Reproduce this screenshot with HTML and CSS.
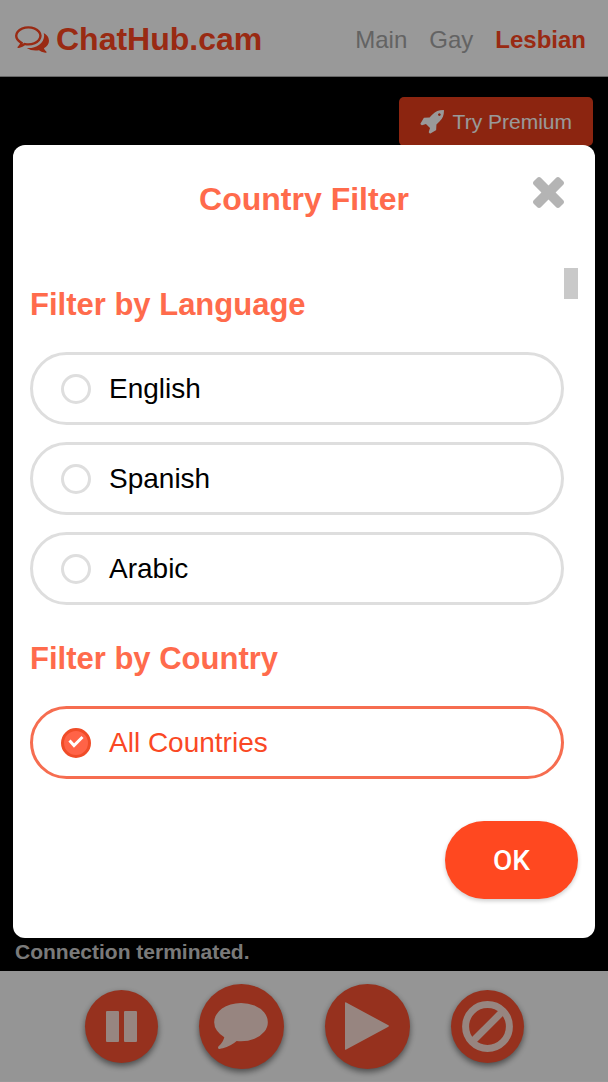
FILE: index.html
```html
<!DOCTYPE html>
<html lang="en">
<head>
<meta charset="utf-8">
<meta name="viewport" content="width=device-width, initial-scale=1">
<title>ChatHub.cam</title>
<link rel="stylesheet" href="styles.css">
</head>
<body>
<div class="page">
  <header class="header">
    <a class="logo" href="#">
      <svg class="logo-icon" viewBox="0 256 1792 1408" aria-hidden="true"><path d="M704 384q-153 0-286 52t-211.5 141-78.5 191q0 82 53 158t149 132l97 56-35 84q34-20 62-39l44-31 53 10q78 14 153 14 153 0 286-52t211.5-141 78.5-191-78.5-191-211.5-141-286-52zm0-128q191 0 353.5 68.5t256.5 186.5 94 257-94 257-256.5 186.5-353.5 68.5q-86 0-176-16-124 88-278 128-36 9-86 16h-3q-11 0-20.5-8t-11.5-21q-1-3-1-6.5t.5-6.5 2-6l2.5-5 3.5-5.5 4-5 4.5-5 4-4.5q5-6 23-25t26-29.5 22.5-29 25-38.5 20.5-44q-124-72-195-177t-71-224q0-139 94-257t256.5-186.5 353.5-68.5zm822 1169q10 24 20.5 44t25 38.5 22.5 29 26 29.5 23 25q1 1 4 4.5t4.5 5 4 5 3.5 5.5l2.5 5 2 6 .5 6.5-1 6.5q-3 14-13 22t-22 7q-50-7-86-16-154-40-278-128-90 16-176 16-271 0-472-132 58 4 88 4 161 0 309-45t264-129q125-92 192-212t67-254q0-77-23-152 129 71 204 178t75 230q0 120-71 224.5t-195 176.5z"/></svg>
      ChatHub.cam
    </a>
    <nav class="nav">
      <a class="nav-link" href="#">Main</a>
      <a class="nav-link" href="#">Gay</a>
      <a class="nav-link nav-link-active" href="#">Lesbian</a>
    </nav>
  </header>

  <main class="stage">
    <button class="premium" type="button">
      <svg class="premium-icon" viewBox="0 128 1664 1664" aria-hidden="true"><path d="M1440 448q0-40-28-68t-68-28-68 28-28 68 28 68 68 28 68-28 28-68zm224-288q0 249-75.5 430.5t-253.5 360.5q-81 80-195 176l-20 379q-2 16-16 26l-384 224q-7 4-16 4-12 0-23-9l-64-64q-13-14-8-32l85-276-281-281-276 85q-3 1-9 1-14 0-23-9l-64-64q-17-19-5-39l224-384q10-14 26-16l379-20q96-114 176-195 188-187 358-258t431-71q14 0 24 9.5t10 22.5z"/></svg>
      Try Premium
    </button>
    <p class="status">Connection terminated.</p>
  </main>

  <footer class="controls">
    <button class="control" type="button" aria-label="Pause">
      <svg class="icon-pause" viewBox="0 0 31 31" aria-hidden="true"><rect width="13" height="31" rx="1"/><rect x="18" width="13" height="31" rx="1"/></svg>
    </button>
    <button class="control control-large" type="button" aria-label="Chat">
      <svg class="icon-comment" viewBox="0 256 1792 1536" aria-hidden="true"><path d="M1792 896q0 174-120 321.5t-326 233-450 85.5q-70 0-145-8-198 175-460 242-49 14-114 22-17 2-30.5-9t-17.5-29v-1q-3-4-.5-12t2-10 4.5-9.5l6-9 7-8.5 8-9q7-8 31-34.5t34.5-38 31-39.5 32.5-51 27-59 26-76q-157-89-247.5-220t-90.5-281q0-130 71-248.5t191-204.5 286-136.5 348-50.5q244 0 450 85.5t326 233 120 321.5z"/></svg>
    </button>
    <button class="control control-large" type="button" aria-label="Next">
      <svg class="icon-play" viewBox="0 0 44 48" aria-hidden="true"><path d="M0 1Q0-.3 1.200.4L43.400 23.300Q44.400 24 43.400 24.700L1.200 47.600Q0 48.300 0 47z"/></svg>
    </button>
    <button class="control" type="button" aria-label="Block">
      <svg class="icon-ban" viewBox="0 0 51 51" aria-hidden="true"><circle cx="25.500" cy="25.500" r="21.900"/><path d="M11 40L40 11"/></svg>
    </button>
  </footer>
</div>

<div class="overlay">
  <form class="modal" role="dialog" aria-labelledby="modal-title">
    <h1 class="modal-title" id="modal-title">Country Filter</h1>
    <button class="close" type="button" aria-label="Close">
      <svg class="close-icon" viewBox="302 366 1188 1188" aria-hidden="true"><path d="M1490 1322q0 40-28 68l-136 136q-28 28-68 28t-68-28l-294-294-294 294q-28 28-68 28t-68-28l-136-136q-28-28-28-68t28-68l294-294-294-294q-28-28-28-68t28-68l136-136q28-28 68-28t68 28l294 294 294-294q28-28 68-28t68 28l136 136q28 28 28 68t-28 68l-294 294 294 294q28 28 28 68z"/></svg>
    </button>
    <div class="scroller">
      <div class="filters">
        <h2 class="filter-title">Filter by Language</h2>
        <div class="options">
          <label class="option"><input class="radio" type="radio" name="filter">English</label>
          <label class="option"><input class="radio" type="radio" name="filter">Spanish</label>
          <label class="option"><input class="radio" type="radio" name="filter">Arabic</label>
        </div>
        <h2 class="filter-title">Filter by Country</h2>
        <div class="options">
          <label class="option option-selected">
            <span class="radio-wrap">
              <input class="radio" type="radio" name="filter" checked>
              <svg class="check" viewBox="0 0 16 13" aria-hidden="true"><path d="M1.500 5.500L6 10.500L14.500 2"/></svg>
            </span>All Countries</label>
        </div>
      </div>
      <div class="scroll-thumb"></div>
    </div>
    <div class="actions">
      <button class="ok" type="button">OK</button>
    </div>
  </form>
</div>
</body>
</html>
```
FILE: styles.css
```css
* {
  box-sizing: border-box;
}

body {
  margin: 0;
  background: #fff;
  font-family: "Liberation Sans", Arial, sans-serif;
}

button {
  border: 0;
  padding: 0;
  font-family: inherit;
  cursor: pointer;
}

svg {
  display: block;
  flex: none;
}

a {
  text-decoration: none;
}

.page {
  display: flex;
  flex-direction: column;
  min-height: 100vh;
}

.header {
  display: flex;
  align-items: center;
  justify-content: space-between;
  height: 77px;
  padding: 2px 22px 0 15px;
  border-bottom: 1px solid #aaa;
  background: #fff;
}

.logo {
  display: flex;
  align-items: center;
  gap: 7px;
  color: #ff4621;
  font-size: 32px;
  font-weight: bold;
}

.logo-icon {
  width: 34px;
  height: 27px;
  fill: currentColor;
}

.nav {
  display: flex;
  gap: 22px;
  padding-top: 2px;
  font-size: 24px;
}

.nav-link {
  color: #a6a6a6;
}

.nav-link-active {
  color: #ff4621;
  font-weight: bold;
}

.stage {
  display: flex;
  flex: 1;
  flex-direction: column;
  justify-content: space-between;
  padding: 20px 15px 7px;
  background: #000;
}

.premium {
  display: flex;
  align-items: center;
  align-self: flex-end;
  gap: 9px;
  height: 49px;
  padding: 0 21px;
  border-radius: 5px;
  background: #e93f1c;
  color: #fff;
  font-size: 21px;
}

.premium-icon {
  width: 24px;
  height: 24px;
  fill: currentColor;
}

.status {
  margin: 0;
  color: #ccc;
  font-size: 21px;
  font-weight: bold;
  line-height: 24px;
}

.controls {
  display: flex;
  align-items: center;
  justify-content: center;
  gap: 41px;
  height: 111px;
  border-bottom: 1px solid #fff;
  background: #f9f9f9;
}

.control {
  display: flex;
  align-items: center;
  justify-content: center;
  width: 73px;
  height: 73px;
  border-radius: 50%;
  background: #fa5232;
  box-shadow: 0 3px 6px rgba(0, 0, 0, 0.5);
  fill: #fcded5;
}

.control-large {
  width: 85px;
  height: 85px;
}

.icon-pause {
  width: 31px;
  height: 31px;
}

.icon-comment {
  width: 54px;
  height: 46px;
}

.icon-play {
  width: 44px;
  height: 48px;
}

.icon-ban {
  width: 51px;
  height: 51px;
  fill: none;
  stroke: #fcded5;
  stroke-width: 7;
}

.overlay {
  position: fixed;
  inset: 0;
  display: flex;
  align-items: center;
  justify-content: center;
  padding: 14px 13px 13px;
  background: rgba(0, 0, 0, 0.4);
}

.modal {
  position: relative;
  width: 100%;
  padding: 36px 17px 39px;
  border-radius: 12px;
  background: #fff;
}

.modal-title {
  margin: 0 0 51px;
  color: #ff6b4c;
  font-size: 32px;
  line-height: 36px;
  text-align: center;
}

.close {
  position: absolute;
  top: 32px;
  right: 31px;
  background: none;
}

.close-icon {
  width: 31px;
  height: 31px;
  fill: #b4b4b4;
}

.scroller {
  display: flex;
  align-items: flex-start;
}

.filters {
  flex: 1;
  padding-top: 19px;
}

.scroll-thumb {
  width: 14px;
  height: 31px;
  background: #c9c9c9;
}

.filter-title {
  margin: 0 0 29px;
  color: #ff6b4c;
  font-size: 31px;
  line-height: 36px;
}

.options {
  display: grid;
  gap: 17px;
}

.options + .filter-title {
  margin-top: 36px;
}

.option {
  display: flex;
  align-items: center;
  gap: 18px;
  height: 73px;
  padding: 0 28px;
  border: 3px solid #dedede;
  border-radius: 37px;
  color: #000;
  font-size: 28px;
}

.option-selected {
  border-color: #f66d50;
  color: #fa4824;
}

.radio {
  flex: none;
  width: 30px;
  height: 30px;
  margin: 0;
  border: 3px solid #dedede;
  border-radius: 50%;
  appearance: none;
}

.radio:checked {
  border-color: #f04c28;
  background: #ff6347;
}

.radio-wrap {
  display: grid;
  place-items: center;
}

.radio-wrap > * {
  grid-area: 1 / 1;
}

.check {
  width: 16px;
  height: 13px;
  margin-bottom: 3px;
  fill: none;
  stroke: #fff;
  stroke-width: 3;
  pointer-events: none;
}

.actions {
  display: flex;
  justify-content: flex-end;
  margin-top: 42px;
}

.ok {
  width: 133px;
  height: 78px;
  border-radius: 39px;
  background: #ff4820;
  box-shadow: 0 2px 4px rgba(0, 0, 0, 0.2);
  color: #fff;
  font-family: Roboto, "Liberation Sans", sans-serif;
  font-size: 28px;
  font-weight: 500;
}
```
